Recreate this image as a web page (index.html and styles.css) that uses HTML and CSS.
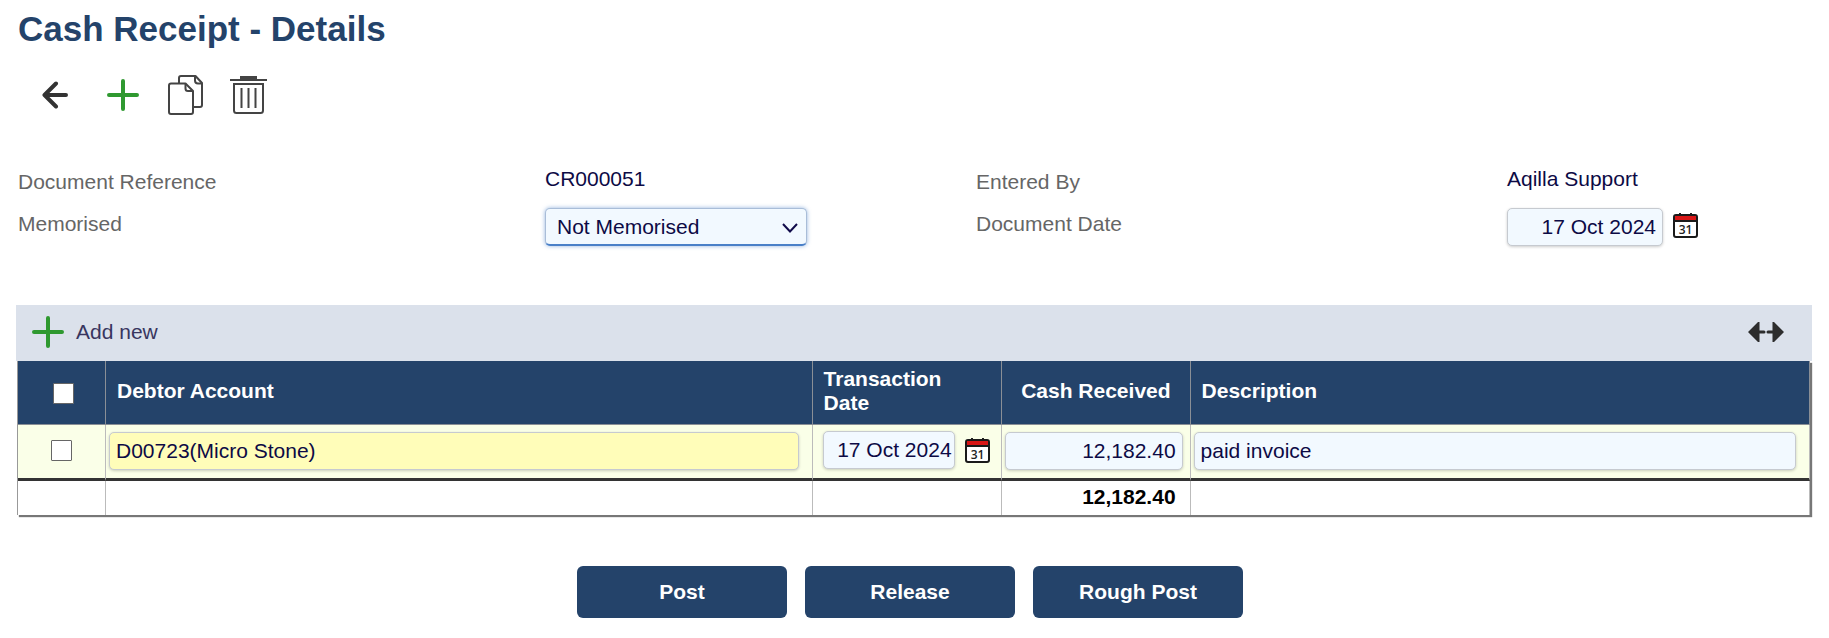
FILE: index.html
```html
<!DOCTYPE html>
<html lang="en">
<head>
<meta charset="utf-8">
<title>Cash Receipt - Details</title>
<link rel="stylesheet" href="styles.css">
</head>
<body>
<main class="page">
  <h1 class="title">Cash Receipt - Details</h1>
  <div class="toolbar">
    <button class="icon-button" type="button" aria-label="Back">
      <svg width="26" height="28" viewBox="0 0 26 28"><path d="M14 2.500L2.500 14L14 25.500M3 14h21" fill="none" stroke="#333" stroke-width="4" stroke-linecap="round" stroke-linejoin="round"/></svg>
    </button>
    <button class="icon-button icon-add" type="button" aria-label="New">
      <svg width="32" height="32" viewBox="0 0 32 32"><path d="M16 2v28M2 16h28" fill="none" stroke="#2f9930" stroke-width="4" stroke-linecap="round"/></svg>
    </button>
    <button class="icon-button icon-copy" type="button" aria-label="Copy">
      <svg width="36" height="40" viewBox="0 0 36 40"><g fill="none" stroke="#444" stroke-width="2" stroke-linejoin="round"><path d="M11 8V3q0-2 2-2h14.500l6.500 7v22q0 2-2 2h-7"/><path d="M27 1v4.500q0 3 3 3h4"/><path d="M3 8.500h14.500l7.500 7.500v21q0 2-2 2H3q-2 0-2-2v-26.500q0-2 2-2z"/><path d="M17.500 8.500v5q0 2.500 2.500 2.500h5"/></g></svg>
    </button>
    <button class="icon-button icon-delete" type="button" aria-label="Delete">
      <svg width="37" height="38" viewBox="0 0 37 38"><path d="M10 0h17v4H10z" fill="#444"/><path d="M0 4h37M4 8h29v26.500q0 2.500-2.500 2.500h-24q-2.500 0-2.500-2.500zM11.500 12v20M18.500 12v20M25.500 12v20" fill="none" stroke="#444" stroke-width="2"/></svg>
    </button>
  </div>

  <form class="fields">
    <span class="label">Document Reference</span>
    <span class="value">CR000051</span>
    <span class="label">Entered By</span>
    <span class="value">Aqilla Support</span>
    <label class="label" for="memorised">Memorised</label>
    <div class="control">
      <div class="select-wrap">
        <select class="field select" id="memorised"><option>Not Memorised</option></select>
        <svg class="chevron" width="16" height="10" viewBox="0 0 16 10"><path d="M1 1L8 8.500l7-7.500" fill="none" stroke="#110b4a" stroke-width="2"/></svg>
      </div>
    </div>
    <label class="label" for="doc-date">Document Date</label>
    <div class="control">
      <input class="field doc-date" id="doc-date" type="text" value="17 Oct 2024">
      <button class="icon-button calendar" type="button" aria-label="Choose document date">
        <svg width="25" height="25" viewBox="0 0 25 25"><path d="M7 0v3M18 0v3" stroke="#222" stroke-width="2"/><rect x="1" y="2" width="23" height="22" rx="2" fill="#fff" stroke="#1a1a1a" stroke-width="2"/><path d="M2 3h21v4H2z" fill="#d81616"/><path d="M1 8h23" stroke="#1a1a1a" stroke-width="2"/><text x="12.500" y="21" text-anchor="middle" class="calendar-day">31</text></svg>
      </button>
    </div>
  </form>

  <section class="lines">
    <div class="lines-bar">
      <button class="add-new" type="button"><svg width="32" height="32" viewBox="0 0 32 32"><path d="M16 2v28M2 16h28" fill="none" stroke="#2f9930" stroke-width="4" stroke-linecap="round"/></svg>Add new</button>
      <button class="icon-button" type="button" aria-label="Resize columns">
        <svg width="36" height="20" viewBox="0 0 36 20"><path d="M0 10L10 0h1.500v20H10zM36 10L26 0h-1.500v20H26z" fill="#2d2d2d"/><path d="M11 10h5M20 10h5" stroke="#2d2d2d" stroke-width="3" stroke-linecap="round"/></svg>
      </button>
    </div>
    <table class="grid">
      <colgroup><col class="col-check"><col class="col-account"><col class="col-date"><col class="col-cash"><col></colgroup>
      <thead>
        <tr>
          <th class="check-head"><input class="check" type="checkbox" aria-label="Select all lines"></th>
          <th>Debtor Account</th>
          <th>Transaction Date</th>
          <th class="cash-head">Cash Received</th>
          <th>Description</th>
        </tr>
      </thead>
      <tbody>
        <tr>
          <td class="check-cell"><input class="check" type="checkbox" aria-label="Select line"></td>
          <td class="text-cell"><input class="field account" type="text" value="D00723(Micro Stone)" aria-label="Debtor account"></td>
          <td class="date-cell">
            <div class="date-line">
              <input class="field line-date" type="text" value="17 Oct 2024" aria-label="Transaction date">
              <button class="icon-button" type="button" aria-label="Choose transaction date">
                <svg width="25" height="25" viewBox="0 0 25 25"><path d="M7 0v3M18 0v3" stroke="#222" stroke-width="2"/><rect x="1" y="2" width="23" height="22" rx="2" fill="#fff" stroke="#1a1a1a" stroke-width="2"/><path d="M2 3h21v4H2z" fill="#d81616"/><path d="M1 8h23" stroke="#1a1a1a" stroke-width="2"/><text x="12.500" y="21" text-anchor="middle" class="calendar-day">31</text></svg>
              </button>
            </div>
          </td>
          <td class="cash-cell"><input class="field cash" type="text" value="12,182.40" aria-label="Cash received"></td>
          <td class="text-cell"><input class="field" type="text" value="paid invoice" aria-label="Description"></td>
        </tr>
      </tbody>
      <tfoot>
        <tr><td></td><td></td><td></td><td class="total">12,182.40</td><td></td></tr>
      </tfoot>
    </table>
  </section>

  <div class="actions">
    <button class="action" type="button">Post</button>
    <button class="action" type="button">Release</button>
    <button class="action" type="button">Rough Post</button>
  </div>
</main>
</body>
</html>
```
FILE: styles.css
```css
* { box-sizing: border-box; }

body {
  margin: 0;
  background: #fff;
  color: #0d0a45;
  font: 21px/24px "Liberation Sans", Arial, sans-serif;
}

button, input, select { font: inherit; color: inherit; }

.calendar-day { font: 600 12px "Open Sans", "Liberation Sans", sans-serif; fill: #222; }

.page { padding: 8px 17px 20px 16px; }

.title {
  margin: 0;
  padding-left: 2px;
  color: #24436a;
  font-size: 35px;
  line-height: 42px;
}

.icon-button {
  display: flex;
  padding: 0;
  border: 0;
  background: none;
}

.toolbar {
  display: flex;
  align-items: center;
  height: 40px;
  margin-top: 25px;
  padding-left: 26px;
}
.icon-add { margin-left: 39px; }
.icon-copy { margin-left: 29px; }
.icon-delete { margin-left: 26px; }

.fields {
  display: grid;
  grid-template-columns: 527fr 431fr 531fr 305fr;
  grid-template-rows: 42px 54px;
  margin-top: 52px;
  padding-left: 2px;
}
.label { padding-top: 3px; color: #666; }
.control { display: flex; align-items: flex-start; gap: 10px; margin-top: -1px; }

.field {
  display: block;
  width: 100%;
  height: 38px;
  padding: 0 6px;
  border: 1px solid #c6cad0;
  border-radius: 5px;
  background: #f2f9ff;
  box-shadow: 0 1px 3px rgba(0, 0, 0, 0.200);
}
.select-wrap { position: relative; width: 262px; }
.select {
  appearance: none;
  padding: 0 11px;
  border-color: #a9bdd8;
  border-bottom: 2px solid #4a80c8;
  box-shadow: 0 0 4px rgba(74, 128, 200, 0.600);
}
.chevron { position: absolute; right: 9px; top: 15px; pointer-events: none; }
.doc-date { width: 156px; text-align: right; }
.calendar { margin-top: 5px; }

.lines { margin-top: 42px; }
.lines-bar {
  display: flex;
  align-items: center;
  justify-content: space-between;
  height: 56px;
  padding: 0 28px 2px 16px;
  background: #dbe1eb;
}
.add-new {
  display: flex;
  align-items: center;
  gap: 12px;
  padding: 0;
  border: 0;
  background: none;
  color: #38365f;
}

.grid {
  width: calc(100% - 3px);
  margin-left: 1px;
  table-layout: fixed;
  border-collapse: separate;
  border-spacing: 0;
  border-left: 1px solid #999;
  box-shadow: 2px 2px 1px #777;
}
.col-check { width: 88px; }
.col-account { width: 39.430%; }
.col-date, .col-cash { width: 189px; }

.grid th, .grid td { border-right: 1px solid #bbb; padding: 0; }
.grid th {
  height: 64px;
  padding: 0 24px 4px 11px;
  border-right-color: #8a8f96;
  border-bottom: 1px solid #8a8f96;
  background: #24436a;
  color: #fff;
  text-align: left;
}
.grid .check-head { padding: 0 0 0 3px; text-align: center; }
.grid .cash-head { padding: 0 19px 4px 0; text-align: right; white-space: nowrap; }
.grid tbody td {
  height: 56px;
  padding-bottom: 2px;
  border-bottom: 3px solid #333;
  background: #faffe8;
}
.grid .check-cell { padding-bottom: 4px; text-align: center; }
.grid .text-cell { padding: 0 13px 2px 3px; }
.grid .cash-cell { padding: 0 7px 2px 3px; }
.grid .date-cell { padding: 0 0 3px 10px; }
.grid tfoot td { height: 34px; padding-bottom: 2px; background: #fff; }
.grid .total { padding-right: 14px; color: #000; font-weight: bold; text-align: right; }

.check {
  appearance: none;
  display: inline-block;
  width: 21px;
  height: 21px;
  margin: 0;
  border: 1px solid #666;
  border-radius: 1px;
  background: #fff;
  vertical-align: middle;
}
.account { background: #fffdb9; }
.cash { text-align: right; }
.date-line { display: flex; align-items: center; gap: 10px; }
.line-date { width: 132px; padding: 0 2px; text-align: right; }

.actions {
  display: flex;
  justify-content: center;
  gap: 18px;
  margin-top: 51px;
  padding-right: 8px;
}
.action {
  width: 210px;
  height: 52px;
  padding: 0;
  border: 0;
  border-radius: 6px;
  background: #24436a;
  color: #fff;
  font-weight: bold;
}
```
